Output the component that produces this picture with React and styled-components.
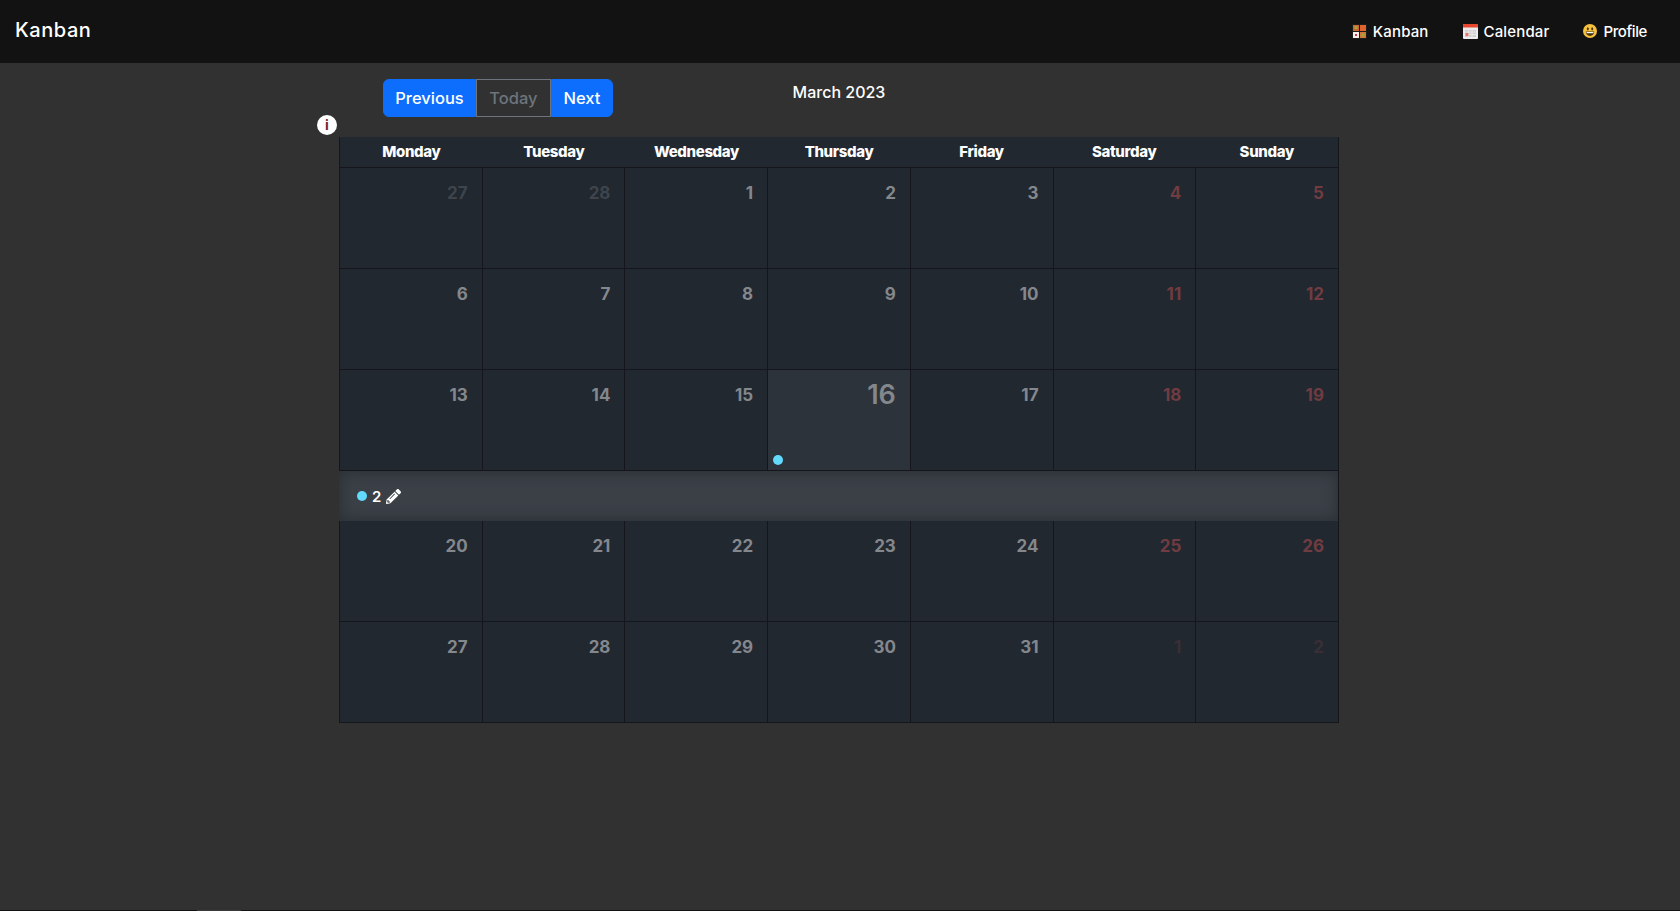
import React from "react";
import styled, { createGlobalStyle } from "styled-components";
import { FaPencilAlt } from "react-icons/fa";

const GlobalStyle = createGlobalStyle`
  html, body {
    margin: 0;
    padding: 0;
    background: #313131;
    font-family: Inter, "Liberation Sans", sans-serif;
  }
`;

const Page = styled.div`
  height: 911px;
  display: flex;
  flex-direction: column;
  overflow: hidden;
`;

const Navbar = styled.nav`
  height: 63px;
  flex: none;
  box-sizing: border-box;
  display: flex;
  align-items: center;
  justify-content: space-between;
  padding: 0 33px 1px 15px;
  background: #121212;
  color: #fff;
`;

const Brand = styled.div`
  font-size: 20px;
  font-weight: 500;
  letter-spacing: 0.55px;
  margin-top: -2px;
`;

const NavLinks = styled.div`
  display: flex;
  gap: 34px;
`;

const NavLink = styled.a`
  display: flex;
  align-items: center;
  gap: 6px;
  font-size: 15px;
  font-weight: 500;
  letter-spacing: ${(p) => p.$spacing || "0"};
`;

const Main = styled.main`
  flex: 1;
  width: 1000px;
  margin-left: 339px;
  position: relative;
`;

const Toolbar = styled.div`
  display: grid;
  grid-template-columns: 1fr 1fr 1fr;
  height: 74px;
  box-sizing: border-box;
  padding: 16px 0 0 44px;
`;

const ButtonGroup = styled.div`
  display: flex;
  height: 38px;
  width: 230px;
`;

const ToolButton = styled.button`
  box-sizing: border-box;
  height: 38px;
  padding: 0;
  font: 500 16.5px Inter, "Liberation Sans", sans-serif;
  width: ${(p) => p.$width}px;
  color: ${(p) => (p.$muted ? "#6c757d" : "#fff")};
  background: ${(p) => (p.$muted ? "transparent" : "#0d6efd")};
  border: 1px solid ${(p) => (p.$muted ? "#6c757d" : "#0d6efd")};
  border-radius: ${(p) => p.$radius || "0"};
`;

const Title = styled.div`
  justify-self: center;
  align-self: start;
  margin-top: 1px;
  margin-left: -44px;
  color: #fff;
  font-size: 16px;
  font-weight: 500;
  line-height: 24px;
`;

const InfoBadge = styled.div`
  position: absolute;
  left: -22px;
  top: 52px;
  width: 20px;
  height: 20px;
  border-radius: 50%;
  background: #fff;
  color: #7a1f2a;
  font: 700 14px/20px Inter, sans-serif;
  text-align: center;
`;

const Calendar = styled.div`
  box-sizing: border-box;
  width: 1000px;
  background: #212830;
  border-right: 1px solid #14161b;
`;

const HeaderRow = styled.div`
  display: grid;
  grid-template-columns: repeat(7, 1fr);
  height: 30px;
  border-left: 1px solid #14161b;
  border-bottom: 1px solid #14161b;
`;

const HeaderCell = styled.div`
  text-align: center;
  color: #fff;
  font-size: 15px;
  font-weight: 800;
  line-height: 30px;
  letter-spacing: -0.35px;
`;

const WeekRow = styled.div`
  display: grid;
  grid-template-columns: repeat(7, 1fr);
  height: 101px;
  box-sizing: border-box;
  border-bottom: 1px solid #14161b;
`;

const DayCell = styled.div`
  position: relative;
  box-sizing: border-box;
  padding: ${(p) => (p.$today ? "8px 14px 0 0" : "13px 14px 0 0")};
  text-align: right;
  font-size: ${(p) => (p.$today ? "27px" : "17px")};
  font-weight: ${(p) => (p.$today ? 600 : 700)};
  line-height: ${(p) => (p.$today ? "34px" : "24px")};
  background: ${(p) => (p.$today ? "#2d333a" : "transparent")};
  color: ${(p) => p.$color};
  border-left: 1px solid #14161b;
`;

const EventDot = styled.span`
  position: absolute;
  left: 5px;
  bottom: 5px;
  width: 10px;
  height: 10px;
  border-radius: 50%;
  background: #61dafb;
`;

const DetailRow = styled.div`
  display: flex;
  align-items: center;
  gap: 5px;
  height: 50px;
  padding-left: 18px;
  background: #3b4047;
  box-shadow: inset 0 0 14px 2px #2b3037;
  color: #fff;
  font-size: 15px;
  font-weight: 600;
`;

const DetailDot = styled.span`
  width: 10px;
  height: 10px;
  border-radius: 50%;
  background: #61dafb;
`;

const FootLine = styled.div`
  flex: none;
  height: 1px;
  background: linear-gradient(
    to right,
    #121212 197px,
    #3a3a3a 197px,
    #3a3a3a 241px,
    #121212 241px
  );
`;

const KanbanIcon = () => (
  <svg width="15" height="15" viewBox="0 0 15 15">
    <rect width="15" height="15" rx="1" fill="#1c1c1c" />
    <rect x="1" y="1" width="6" height="6" fill="#c9652e" />
    <rect x="2.5" y="2" width="3" height="3" fill="#a5a53a" />
    <rect x="8" y="1" width="6" height="6" fill="#e0622c" />
    <rect x="1" y="8" width="6" height="6" fill="#f6eeea" />
    <rect x="8" y="8" width="6" height="6" fill="#d2773a" />
    <rect x="9.5" y="9.5" width="3" height="3" fill="#a5a53a" />
    <rect x="3" y="10" width="2" height="2" fill="#d13b3b" />
  </svg>
);

const CalendarIcon = () => (
  <svg width="15" height="15" viewBox="0 0 15 15">
    <rect width="15" height="15" rx="1" fill="#ececec" />
    <rect width="15" height="3.5" fill="#e5482f" />
    <path d="M2 6h11v7H2z" fill="#cfcfcf" />
    <path d="M2 8h11M2 10.5h11M5.5 6v7M9 6v7" stroke="#efefef" strokeWidth="0.7" />
    <rect x="2.5" y="9" width="3" height="3" fill="#e3796c" />
  </svg>
);

const SmileIcon = () => (
  <svg width="14" height="14" viewBox="0 0 14 14">
    <circle cx="7" cy="7" r="7" fill="#f6c23c" />
    <ellipse cx="4.8" cy="4.8" rx="1" ry="1.6" fill="#4a3410" />
    <ellipse cx="9.2" cy="4.8" rx="1" ry="1.6" fill="#4a3410" />
    <path d="M2.8 7.6h8.4c0 2.6-1.9 4.4-4.2 4.4S2.8 10.2 2.8 7.6z" fill="#4a3410" />
    <path d="M3.6 8h6.8v1.2H3.6z" fill="#fff" />
  </svg>
);

const DAY_NAMES = ["Monday", "Tuesday", "Wednesday", "Thursday", "Friday", "Saturday", "Sunday"];

const WEEKS = [
  [[27, true], [28, true], [1], [2], [3], [4], [5]],
  [[6], [7], [8], [9], [10], [11], [12]],
  [[13], [14], [15], [16], [17], [18], [19]],
  [[20], [21], [22], [23], [24], [25], [26]],
  [[27], [28], [29], [30], [31], [1, true], [2, true]],
];

const dayColor = (col, outside) => {
  if (col >= 5) return outside ? "#3a2f36" : "#703c41";
  return outside ? "#3f444c" : "#84878c";
};

const Week = ({ days }) => (
  <WeekRow>
    {days.map(([num, outside], col) => {
      const today = num === 16;
      return (
        <DayCell key={col} $today={today} $color={dayColor(col, outside)}>
          {num}
          {today && <EventDot />}
        </DayCell>
      );
    })}
  </WeekRow>
);

const App = () => (
  <Page>
    <GlobalStyle />
    <Navbar>
      <Brand>Kanban</Brand>
      <NavLinks>
        <NavLink $spacing="0.15px"><KanbanIcon />Kanban</NavLink>
        <NavLink $spacing="0.15px"><CalendarIcon />Calendar</NavLink>
        <NavLink $spacing="-0.4px"><SmileIcon />Profile</NavLink>
      </NavLinks>
    </Navbar>
    <Main>
      <Toolbar>
        <ButtonGroup>
          <ToolButton $width={93} $radius="6px 0 0 6px">Previous</ToolButton>
          <ToolButton $width={75} $muted>Today</ToolButton>
          <ToolButton $width={62} $radius="0 6px 6px 0">Next</ToolButton>
        </ButtonGroup>
        <Title>March 2023</Title>
      </Toolbar>
      <InfoBadge>i</InfoBadge>
      <Calendar>
        <HeaderRow>
          {DAY_NAMES.map((name) => (
            <HeaderCell key={name}>{name}</HeaderCell>
          ))}
        </HeaderRow>
        {WEEKS.slice(0, 3).map((days, i) => (
          <Week key={i} days={days} />
        ))}
        <DetailRow>
          <DetailDot />
          2
          <FaPencilAlt size={15} />
        </DetailRow>
        {WEEKS.slice(3).map((days, i) => (
          <Week key={i} days={days} />
        ))}
      </Calendar>
    </Main>
    <FootLine />
  </Page>
);

export default App;
